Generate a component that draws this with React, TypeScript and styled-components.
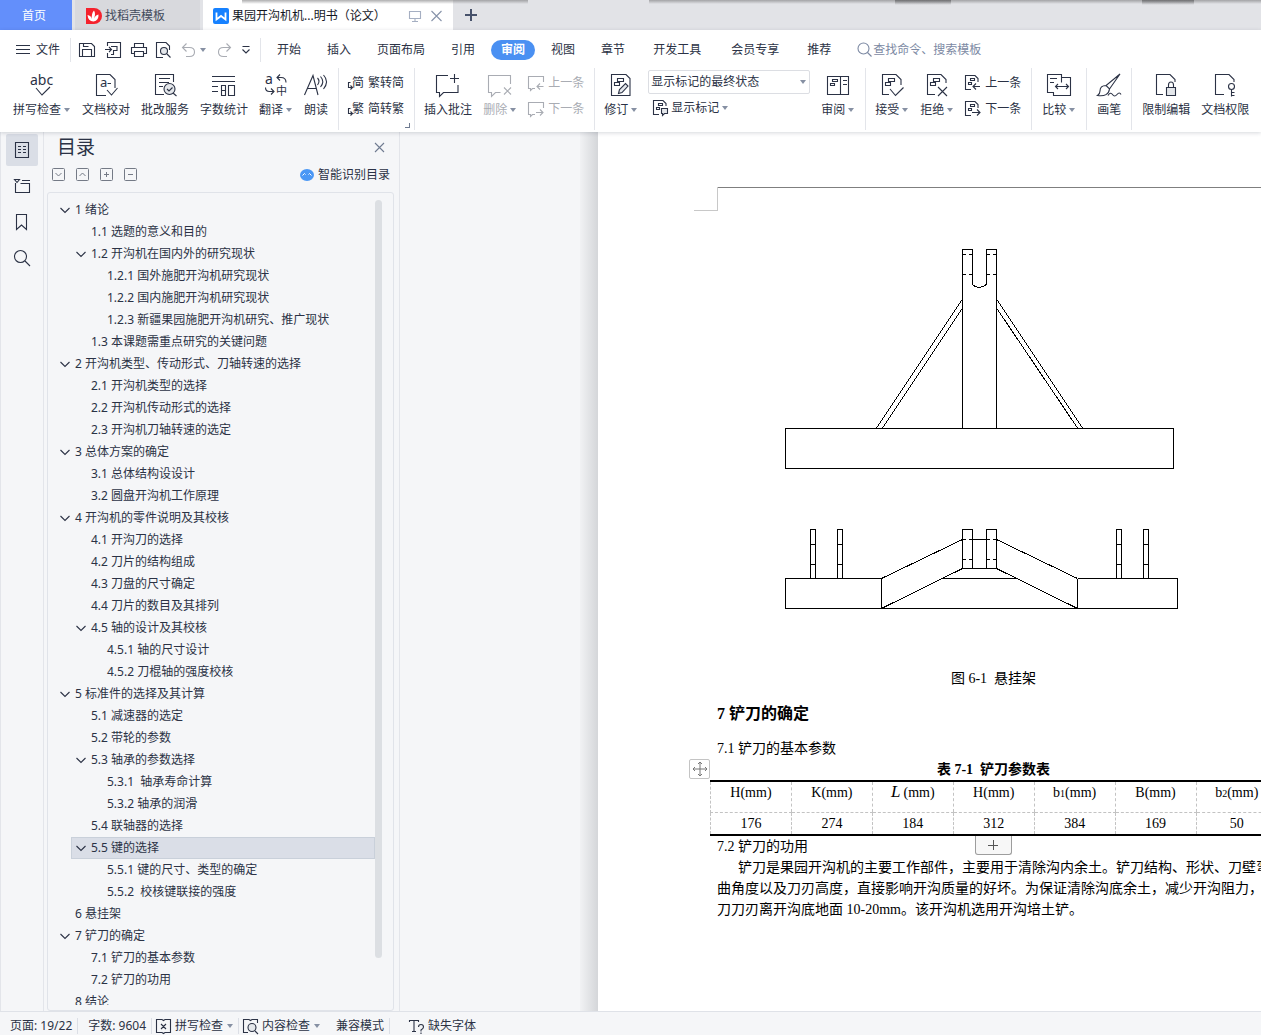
import React from "react";
import styled, { createGlobalStyle, css } from "styled-components";

const INK = "#2b3245";
const MUTED = "#a9acb3";
const SLATE = "#6f7b91";
const LINE = "#e3e5ea";
const UI_FONT = '"Noto Sans", "Noto Sans CJK SC", sans-serif';
const DOC_FONT = '"Liberation Serif", "Noto Sans CJK SC", serif';

const GlobalStyle = createGlobalStyle`
  * { box-sizing: border-box; }
  body { margin: 0; font-family: ${UI_FONT}; font-size: 12px; line-height: 16px; color: ${INK}; background: #f5f6f8; }
  h1, h2, h3, p, ul { margin: 0; padding: 0; font-weight: normal; }
  button, select, input { font: inherit; color: inherit; background: none; border: 0; padding: 0; margin: 0; border-radius: 0; }
  button { cursor: pointer; white-space: nowrap; }
  svg { display: block; flex: none; overflow: visible; }
`;

/* ---------- shell ---------- */

const Shell = styled.div`
  display: flex;
  flex-direction: column;
  height: 100vh;
  overflow: hidden;
`;

const TabBar = styled.nav`
  position: relative;
  display: flex;
  flex: none;
  height: 30px;
  background: #e2e3e7;
`;

const TopShade = styled.div<{ $left: string; $right: string; $dark?: boolean }>`
  position: absolute;
  top: 0;
  left: ${(p) => p.$left};
  right: ${(p) => p.$right};
  height: ${(p) => (p.$dark ? 5 : 4)}px;
  pointer-events: none;
  background: linear-gradient(${(p) => (p.$dark ? "rgba(70,70,72,.55)" : "rgba(120,120,122,.6)")}, rgba(150, 150, 152, 0));
`;

const Tab = styled.button<{ $kind: "home" | "idle" | "active" }>`
  display: flex;
  align-items: center;
  height: 30px;
  margin-right: 3px;
  padding-top: 2px;
  font-size: 12px;
  ${(p) =>
    p.$kind === "home" &&
    css`
      width: 72px;
      justify-content: center;
      padding-right: 4px;
      color: #fff;
      background: #638ffb;
    `}
  ${(p) =>
    p.$kind === "idle" &&
    css`
      width: 125px;
      padding-left: 10px;
      gap: 3px;
      color: #434b5c;
      background: #d8d9dd;
    `}
  ${(p) =>
    p.$kind === "active" &&
    css`
      width: 250px;
      margin-right: 0;
      padding-left: 10px;
      padding-right: 11px;
      gap: 3px;
      color: #14171f;
      background: #fff;
    `}
`;

const TabTitle = styled.span`
  flex: 1;
  text-align: left;
`;

const NewTab = styled.button`
  display: grid;
  place-items: center;
  width: 36px;
`;

/* ---------- menu row ---------- */

const Head = styled.header`
  position: relative;
  z-index: 1;
  flex: none;
  background: #fff;
  box-shadow: 0 1px 4px rgba(30, 40, 60, 0.18);
`;

const MenuRow = styled.div`
  display: flex;
  align-items: center;
  height: 38px;
  padding-top: 1px;
  white-space: nowrap;
`;

const FileButton = styled.button`
  display: flex;
  align-items: center;
  gap: 6px;
  padding: 0 10px 0 16px;
`;

const QuickTools = styled.div`
  display: flex;
  align-items: center;
  gap: 10px;
  height: 24px;
  padding: 0 8px;
  border: solid ${LINE};
  border-width: 0 1px;
`;

const UndoPair = styled.div`
  display: flex;
  align-items: center;
  gap: 5px;
`;

const IconButton = styled.button<{ $w?: number }>`
  display: grid;
  place-items: center;
  width: ${(p) => p.$w ?? 16}px;
  height: 16px;
`;

const MenuItem = styled.button<{ $wide?: boolean; $active?: boolean }>`
  padding: 0 ${(p) => (p.$wide ? 15 : 13)}px;
  height: 20px;
  ${(p) =>
    p.$active &&
    css`
      margin: 0 3px;
      padding: 0 10px;
      border-radius: 10px;
      color: #fff;
      font-weight: bold;
      background: #4a90f2;
    `}
`;

const MenuList = styled.div`
  display: flex;
  align-items: center;
  padding-left: 3px;
`;

const Search = styled.label`
  display: flex;
  align-items: center;
  gap: 1px;
  flex: 1;
  padding-left: 13px;
  color: #7c89a3;
`;

const SearchInput = styled.input`
  flex: 1;
  min-width: 120px;
  height: 20px;
  outline: 0;
  &::placeholder { color: #7c89a3; opacity: 1; }
`;

/* ---------- ribbon ---------- */

const Ribbon = styled.div`
  display: flex;
  height: 64px;
  padding: 0 0 2px 3px;
`;

const Group = styled.div<{ $last?: boolean; $tight?: boolean }>`
  position: relative;
  display: flex;
  flex: none;
  gap: 11px;
  padding: 0 10px 0 ${(p) => (p.$tight ? 9 : 10)}px;
  border-right: ${(p) => (p.$last ? "0" : `1px solid ${LINE}`)};
`;

const BigButton = styled.button<{ $off?: boolean }>`
  display: flex;
  flex-direction: column;
  align-items: center;
  gap: 5px;
  padding-top: 5px;
  height: 50px;
  color: ${(p) => (p.$off ? MUTED : INK)};
`;

const Labelled = styled.span`
  display: flex;
  align-items: center;
`;

const Stack = styled.div`
  display: flex;
  flex-direction: column;
  gap: 6px;
  padding-top: 5px;
`;

const SmallButton = styled.button<{ $off?: boolean }>`
  display: flex;
  align-items: center;
  gap: 4px;
  height: 20px;
  color: ${(p) => (p.$off ? MUTED : INK)};
`;

const MarkupStack = styled(Stack)`
  gap: 4px;
  padding-top: 2px;
  margin-left: -1px;
`;

const MarkupOption = styled(SmallButton)`
  gap: 3px;
  padding-left: 4px;
`;

const SelectBox = styled.label`
  display: flex;
  align-items: center;
  width: 162px;
  height: 24px;
  padding: 0 3px 0 2px;
  border: 1px solid #dcdee3;
  border-radius: 2px;
`;

const Select = styled.select`
  flex: 1;
  min-width: 0;
  height: 22px;
  appearance: none;
  outline: 0;
`;

const CaretBox = styled.span`
  padding: 0 1px 0 3px;
`;

const Launcher = styled.button`
  position: absolute;
  right: 4px;
  bottom: 2px;
  width: 5px;
  height: 5px;
  border: solid ${SLATE};
  border-width: 0 1px 1px 0;
`;

/* ---------- left side ---------- */

const Body = styled.div`
  display: flex;
  flex: 1;
  min-height: 0;
`;

const Rail = styled.nav`
  display: flex;
  flex-direction: column;
  flex: none;
  align-items: center;
  gap: 4px;
  width: 44px;
  padding-top: 2px;
  border: solid ${LINE};
  border-width: 0 1px;
`;

const RailButton = styled.button<{ $on?: boolean }>`
  display: grid;
  place-items: center;
  width: 32px;
  height: 32px;
  border-radius: 2px;
  background: ${(p) => (p.$on ? "#dadee6" : "none")};
`;

const Panel = styled.aside`
  display: flex;
  flex-direction: column;
  flex: none;
  width: 356px;
  padding: 0 5px 0 3px;
  border-right: 1px solid ${LINE};
`;

const PanelHead = styled.div`
  display: flex;
  align-items: center;
  justify-content: space-between;
  height: 30px;
  padding: 0 9px 0 10px;
`;

const PanelTitle = styled.h2`
  font-size: 19px;
  line-height: 26px;
`;

const PanelTools = styled.div`
  display: flex;
  align-items: center;
  gap: 10px;
  height: 30px;
  padding: 0 4px 5px 5px;
`;

const SmartButton = styled.button`
  display: flex;
  align-items: center;
  gap: 4px;
  margin-left: auto;
`;

const TreeBox = styled.div`
  display: flex;
  flex: 1;
  min-height: 0;
  padding: 6px 11px 5px 7px;
  border: 1px solid #e0e3e9;
  border-radius: 3px;
`;

const Tree = styled.ul`
  flex: 1;
  overflow: hidden;
  list-style: none;
`;

const TreeRow = styled.li<{ $level: number; $on?: boolean }>`
  display: flex;
  align-items: center;
  height: 22px;
  margin-left: ${(p) => p.$level * 16}px;
  white-space: pre;
  background: ${(p) => (p.$on ? "#dadee7" : "none")};
  box-shadow: ${(p) => (p.$on ? "inset 0 0 0 1px #c9d0da" : "none")};
`;

const Toggle = styled.button`
  display: grid;
  place-items: center;
  width: 20px;
  height: 20px;
`;

const ToggleSpace = styled.span`
  width: 20px;
`;

const ScrollThumb = styled.div`
  width: 7px;
  height: 94%;
  margin-top: 1px;
  border-radius: 4px;
  background: #dcdfe3;
`;

/* ---------- document ---------- */

const Canvas = styled.main`
  flex: 1;
  display: flex;
  min-width: 0;
  overflow: hidden;
  padding-left: 180px;
`;

const PageEdge = styled.div`
  flex: none;
  width: 18px;
  background: linear-gradient(90deg, #f1f2f4, #d4d6d9);
`;

const Page = styled.article`
  flex: none;
  width: 794px;
  padding: 55px 122px 0 96px;
  background: #fff;
  color: #000;
  font-family: ${DOC_FONT};
  font-size: 14px;
  line-height: 21px;
`;

const HeaderLine = styled.div`
  display: flex;
`;

const Corner = styled.div`
  width: 24px;
  height: 24px;
  border: solid #c8c8c8;
  border-width: 0 1px 1px 0;
`;

const Rule = styled.div`
  flex: 1;
  border-top: 1px solid #7f7f7f;
`;

const Content = styled.div`
  padding-left: 23px;
`;

const Figure = styled.figure`
  display: flex;
  flex-direction: column;
  align-items: center;
  gap: 58px;
  margin: 0;
  padding-top: 38px;
  white-space: pre;
`;

const Heading = styled.h1`
  margin-top: 12px;
  font-size: 16px;
  line-height: 26px;
  font-weight: bold;
`;

const SubHeading = styled.h3<{ $gap?: boolean }>`
  font-size: 14px;
  line-height: 21px;
  margin-top: ${(p) => (p.$gap ? 11 : 0)}px;
`;

const TableWrap = styled.div`
  position: relative;
  margin: 0 -7px;
`;

const DataTable = styled.table`
  width: 100%;
  table-layout: fixed;
  border-collapse: collapse;
  border: solid #000;
  border-width: 2px 0;
  caption {
    font-weight: bold;
    white-space: pre;
  }
`;

const cell = css`
  padding: 0;
  vertical-align: top;
  font-weight: normal;
  text-align: center;
  white-space: nowrap;
  border-left: 1px dashed #c3c3c3;
`;

const HeadCell = styled.th`
  ${cell}
  height: 31px;
  border-bottom: 1px dashed #c3c3c3;
  i { font-size: 17px; line-height: 16px; margin-right: 3px; }
  small { font-size: 10px; line-height: 16px; }
`;

const DataCell = styled.td`
  ${cell}
`;

const MoveHandle = styled.button`
  position: absolute;
  left: -21px;
  top: 0;
  display: grid;
  place-items: center;
  width: 21px;
  height: 20px;
  border: 1px solid #c4c4c4;
  border-radius: 2px;
  background: #fff;
`;

const AddRow = styled.button`
  position: absolute;
  left: calc(50% - 19px);
  top: 100%;
  display: grid;
  place-items: center;
  width: 37px;
  height: 19px;
  border: 1px solid #9d9d9d;
  border-top: 0;
  border-radius: 0 0 3px 3px;
  background: #f7f7f7;
`;

const Paragraph = styled.p<{ $indent?: boolean }>`
  text-indent: ${(p) => (p.$indent ? 21 : 0)}px;
  white-space: nowrap;
`;

/* ---------- status bar ---------- */

const StatusBar = styled.footer`
  display: flex;
  align-items: center;
  flex: none;
  height: 24px;
  padding-top: 5px;
  border-top: 1px solid #dfe2e8;
  white-space: nowrap;
`;

const StatusItem = styled.button<{ $line?: boolean; $wide?: boolean }>`
  display: flex;
  align-items: center;
  gap: 4px;
  height: 16px;
  padding: 0 5px 0 ${(p) => (p.$wide ? 10 : 4)}px;
  border-right: 1px solid ${(p) => (p.$line ? "#dcdfe6" : "transparent")};
`;

const StatusWarning = styled(StatusItem)`
  margin-left: 15px;
`;

/* ---------- icons ---------- */

const Svg = ({ s = 24, w, children, c = "currentColor" }: { s?: number; w?: number; c?: string; children: React.ReactNode }) => (
  <svg width={w ?? s} height={s} viewBox={`0 0 ${w ?? s} ${s}`} fill="none" stroke={c} strokeWidth="1.1" aria-hidden="true">
    {children}
  </svg>
);

const Glyph = ({ x, y, size, children }: { x: number; y: number; size: number; children: string }) => (
  <text x={x} y={y} fontSize={size} fill="currentColor" stroke="none">{children}</text>
);

const Caret = () => (
  <svg width="6" height="4" viewBox="0 0 6 4" aria-hidden="true"><path d="M0 0h6L3 4z" fill="#8690a3" /></svg>
);

const Bars = () => <path d="M8.5 5.500h6v3h-6zM5.500 9.500h5v3h-5z" />;
const SmallBars = () => <path d="M6.5 3.500h4v2h-4zM4.500 7.500h3v2h-3z" />;

const icons: Record<string, React.ReactNode> = {
  spell: <Svg><Glyph x={0} y={12} size={14}>abc</Glyph><path d="M6 15l6 7 8-8" /></Svg>,
  proof: <Svg><path d="M12 22.500H2.500v-21H16l5 5V15M13 17l4.500 5 6-7M13.500 10.500H17" /><Glyph x={6} y={14} size={13}>a</Glyph></Svg>,
  service: <Svg><path d="M11 21.500H2.500v-20h18V9M6 5.500h11M6 9.500h10M6 13.500h4M20 20l3.500 3" /><circle cx="16.500" cy="16" r="5.500" fill="#e4e7eb" /><path d="M14 16l2 2 3.500-3.500" /></Svg>,
  count: <Svg><path d="M0 3.500h23M0 8.500h23M0 13.500h6M0 18.500h6M9.500 12.500h4v10h-4zM9.500 17.500h4M16.500 12.500h6v10h-6z" /></Svg>,
  translate: <Svg><Glyph x={1} y={11} size={14}>a</Glyph><Glyph x={12} y={22} size={11}>中</Glyph><path d="M16 1.500l-3 3 3 3M13 4.500h4q5 0 5 5M1.500 14.500q0 4 4 4h4M7 15.500l3 3-3 3" /></Svg>,
  read: <Svg><path d="M0.500 22L9 2.500 14 22M3.500 15.500H12M13.500 5q3 3 0 7M16.500 3.500q4.500 5 0 10.500M19.500 2q6 6.500 0 14" /></Svg>,
  comment: <Svg><path d="M12 2.500H.500v17h3v4l4-4h14.500V12M18.500 1v9M14 5.500h9" /></Svg>,
  remove: <Svg><path d="M22.500 11V2.500H.500v17h3v4l4-4h5M16 14.500l7 7M23 14.500l-7 7" /></Svg>,
  revise: <Svg><path d="M2.500 1.500H17l4 4v17H2.500z" /><Bars /><path d="M9.500 20.500l1-4 6-6 2.500 2.500-6 6.500z" fill="#e4e7eb" /></Svg>,
  review: <Svg><path d="M1.500 3.500h21v18h-21zM14.500 3.500v18M17 7.500h4M17 11.500h4M6.500 6.500h5v2h-5zM4.500 10.500h4v2h-4z" /></Svg>,
  accept: <Svg><path d="M9 21.500H2.500v-20H16l5 5V12M10 16l5.500 6.500 8-8" /><Bars /></Svg>,
  reject: <Svg><path d="M10 21.500H2.500v-20H16l5 5V10M13 14l9 9M22 14l-9 9" /><Bars /></Svg>,
  compare: <Svg><path d="M7 19.500H.500v-18h14v8M3 5.500h7M3 9.500h4M14.500 4.500h9v18h-17v-3M8.500 13.500h13M11 11l-2.500 2.500L11 16M19 11l2.500 2.500L19 16" /></Svg>,
  brush: <Svg><path d="M23 1L9 12.500l3.500 3.500zM9 12.500q-6 0-6 5.500 0 3-2.500 4.500 11 1.500 12-6.500M11 22.500q2.500-4 4.500-1t4.500 0 4 0" /></Svg>,
  lock: <Svg><path d="M9 21.500H2.500v-20H16l5 5V9" /><path d="M12.500 14.500h9v8h-9z" fill="#e4e7eb" /><path d="M14.500 14.500V12q0-3 2.500-3t2.500 3v2.500" /></Svg>,
  rights: <Svg><path d="M11 21.500H2.500v-20H16l5 5V9M18.500 16.500v7M18.500 19.500h3M18.500 22.500h3" /><circle cx="18.500" cy="13.500" r="3" /></Svg>,
  toSimple: <Svg s={16}><Glyph x={4} y={12} size={12}>简</Glyph><path d="M2.500 7.500h-2v5H4M2.500 10.500l2 2-2 2" /></Svg>,
  toTrad: <Svg s={16}><Glyph x={4} y={12} size={12}>繁</Glyph><path d="M2.500 7.500h-2v5H4M2.500 10.500l2 2-2 2" /></Svg>,
  prevNote: <Svg s={16}><path d="M15.500 7V1.500H.500v12h2v2l2-2H7M15.500 11.500H9M12 8.500l-3 3 3 3" /></Svg>,
  nextNote: <Svg s={16}><path d="M15.500 7V1.500H.500v12h2v2l2-2H7M8 11.500h7M12 8.500l3 3-3 3" /></Svg>,
  prevEdit: <Svg s={16}><path d="M6 14.500H.500V.500H10l3 3V7M15 11.500H8M11 8.500l-3 3 3 3" /><path d="M5.500 3.500h4v2h-4zM3.500 7.500h3v2h-3z" /></Svg>,
  nextEdit: <Svg s={16}><path d="M6 14.500H.500V.500H10l3 3V7M7 11.500h8M12 8.500l3 3-3 3" /><path d="M5.500 3.500h4v2h-4zM3.500 7.500h3v2h-3z" /></Svg>,
  markup: <Svg s={16}><path d="M7 14.500H1.500V.500H11l3 3V6" /><SmallBars /><path d="M9.500 8.500h6v5h-3l-2 2v-2h-1z" fill="#e4e7eb" /></Svg>,
  save: <Svg s={16}><path d="M.500 1.500h12l3 3v10H.500zM3.500 14.500v-7h9v7M4.500 1.500v3h5" /></Svg>,
  pdf: <Svg s={16}><path d="M2.500 4V.500h13v15h-13V11M0 7.500h6M4 5l2.500 2.500L4 10M6 4.500h6v4H8.500v4H6" /></Svg>,
  print: <Svg s={16}><path d="M3.500 5V1.500h9V5M3.500 11.500h-3v-6h15v6h-3M3.500 9.500h9v5h-9z" /></Svg>,
  preview: <Svg s={16}><path d="M8 15.500H1.500V.500H11l3.500 3.500V8M12 12l3.500 3.500" /><circle cx="9" cy="9" r="3.500" fill="#e4e7eb" /></Svg>,
  undo: <Svg s={16} c={MUTED}><path d="M5.500 1.500l-4 4 4 4M1.500 5.500h7q5 0 5 4.500t-5 4.500H5" /></Svg>,
  redo: <Svg s={16} c={MUTED}><path d="M10.500 1.500l4 4-4 4M14.500 5.500h-7q-5 0-5 4.500t5 4.500H11" /></Svg>,
};

type Tool = { icon: string; label: string; caret?: boolean; off?: boolean };
const BigTool = ({ icon, label, caret, off }: Tool) => (
  <BigButton $off={off}>
    {icons[icon]}
    <Labelled>
      {label}
      {caret && <CaretBox><Caret /></CaretBox>}
    </Labelled>
  </BigButton>
);

const SmallTool = ({ icon, label, off }: Tool) => (
  <SmallButton $off={off}>{icons[icon]}{label}</SmallButton>
);

const BoxIcon = ({ d }: { d: string }) => (
  <svg width="14" height="14" viewBox="0 0 14 14" fill="none" stroke="#747a86" aria-hidden="true">
    <rect x=".5" y=".5" width="12" height="12" rx="1" />
    <path d={d} />
  </svg>
);

/* ---------- data ---------- */

type Node = [level: number, text: string, open?: boolean, selected?: boolean];
const outline: Node[] = [
  [0, "1 绪论", true],
  [1, "1.1 选题的意义和目的"],
  [1, "1.2 开沟机在国内外的研究现状", true],
  [2, "1.2.1 国外施肥开沟机研究现状"],
  [2, "1.2.2 国内施肥开沟机研究现状"],
  [2, "1.2.3 新疆果园施肥开沟机研究、推广现状"],
  [1, "1.3 本课题需重点研究的关键问题"],
  [0, "2 开沟机类型、传动形式、刀轴转速的选择", true],
  [1, "2.1 开沟机类型的选择"],
  [1, "2.2 开沟机传动形式的选择"],
  [1, "2.3 开沟机刀轴转速的选定"],
  [0, "3 总体方案的确定", true],
  [1, "3.1 总体结构设设计"],
  [1, "3.2 圆盘开沟机工作原理"],
  [0, "4 开沟机的零件说明及其校核", true],
  [1, "4.1 开沟刀的选择"],
  [1, "4.2 刀片的结构组成"],
  [1, "4.3 刀盘的尺寸确定"],
  [1, "4.4 刀片的数目及其排列"],
  [1, "4.5 轴的设计及其校核", true],
  [2, "4.5.1 轴的尺寸设计"],
  [2, "4.5.2 刀棍轴的强度校核"],
  [0, "5 标准件的选择及其计算", true],
  [1, "5.1 减速器的选定"],
  [1, "5.2 带轮的参数"],
  [1, "5.3 轴承的参数选择", true],
  [2, "5.3.1  轴承寿命计算"],
  [2, "5.3.2 轴承的润滑"],
  [1, "5.4 联轴器的选择"],
  [1, "5.5 键的选择", true, true],
  [2, "5.5.1 键的尺寸、类型的确定"],
  [2, "5.5.2  校核键联接的强度"],
  [0, "6 悬挂架"],
  [0, "7 铲刀的确定", true],
  [1, "7.1 铲刀的基本参数"],
  [1, "7.2 铲刀的功用"],
  [0, "8 结论"],
];

const columns: { head: React.ReactNode; value: number }[] = [
  { head: "H(mm)", value: 176 },
  { head: "K(mm)", value: 274 },
  { head: <><i>L</i>(mm)</>, value: 184 },
  { head: "H(mm)", value: 312 },
  { head: <>b<small>1</small>(mm)</>, value: 384 },
  { head: "B(mm)", value: 169 },
  { head: <>b<small>2</small>(mm)</>, value: 50 },
];

const HitchDrawing = () => (
  <svg width="418" height="361" viewBox="785 249 418 361" fill="none" stroke="#000" shapeRendering="crispEdges" role="img" aria-label="悬挂架">
    <path d="M785.5 428.5h388v40h-388z" />
    <path d="M962.5 428.5v-179h10v35q6 6 14 0v-35h10v179" />
    <path d="M962 254.500h4m3 0h4M986 254.500h4m3 0h4M962 274.500h4m3 0h4M986 274.500h4m3 0h4" />
    <path d="M962.500 299L876.500 428M962.500 308L882.500 428M996.500 299L1082.500 428M996.500 308L1077.500 428" />
    <path d="M881.500 578.500h-96v30h392v-30h-100M881.500 578.500v30M1077.500 578.500v30" />
    <path d="M810.500 578.500v-49h5v49M810.500 544.500h5M810.500 564.500h5M837.500 578.500v-49h5v49M837.500 544.500h5M837.500 564.500h5" />
    <path d="M1116.500 578.500v-49h5v49M1116.500 544.500h5M1116.500 564.500h5M1143.500 578.500v-49h5v49M1143.500 544.500h5M1143.500 564.500h5" />
    <path d="M962.500 568.500v-39h10v39M986.500 568.500v-39h10v39M962.500 568.500h34M972.500 539.500h14" />
    <path d="M962 539.500h4m3 0h4M986 539.500h4m3 0h4M962 559.500h4m3 0h4M986 559.500h4m3 0h4" />
    <path d="M881.500 578.500l81-39M996.500 539.500l81 39M881.500 608.500l81-40M996.500 568.500l81 40M942 578.500h75" />
  </svg>
);

export default function App() {
  return (
    <Shell>
      <GlobalStyle />
      <TabBar>
        <Tab $kind="home">首页</Tab>
        <Tab $kind="idle">
          <svg width="17" height="16" viewBox="0 0 17 16" aria-hidden="true">
            <path d="M1 0h8a7.500 7.500 0 010 16H1z" fill="#f5222d" />
            <path d="M8.500 13.500Q3 13 2.500 7q3.500.500 4.500 4Q6 6 9 2.500q2 3.500 0 8 1.500-3.500 4.500-4 .500 6-5 7z" fill="#fff" />
          </svg>
          找稻壳模板
        </Tab>
        <Tab $kind="active">
          <svg width="16" height="16" viewBox="0 0 16 16" aria-hidden="true">
            <rect width="16" height="16" rx="2" fill="#1681ff" />
            <path d="M3.500 4.500V11.500L8 8l4.500 3.500v-7" fill="none" stroke="#fff" strokeWidth="1.800" />
          </svg>
          <TabTitle>果园开沟机机...明书（论文）</TabTitle>
          <Svg s={12} c="#a5afc2"><path d="M.500 1.500h11v7H.500zM6 8.500v3M3 11.500h6" /></Svg>
          <Svg s={12} w={18} c="#8793aa"><path d="M7.500 1l10 10M17.500 1l-10 10" /></Svg>
        </Tab>
        <NewTab aria-label="新建标签">
          <svg width="12" height="12" viewBox="0 0 12 12" stroke="#47526b" strokeWidth="2" aria-hidden="true"><path d="M6 0v12M0 6h12" /></svg>
        </NewTab>
        <TopShade $left="19.2%" $right="58.1%" />
        <TopShade $left="51.5%" $right="0" />
        <TopShade $left="71%" $right="24.600%" $dark />
        <TopShade $left="90.600%" $right="5.300%" $dark />
      </TabBar>

      <Head>
        <MenuRow>
          <FileButton>
            <Svg s={14}><path d="M0 2.500h14M0 6.500h14M0 10.500h14" /></Svg>
            文件
          </FileButton>
          <QuickTools>
            <IconButton aria-label="保存">{icons.save}</IconButton>
            <IconButton aria-label="输出为PDF">{icons.pdf}</IconButton>
            <IconButton aria-label="打印" $w={14}>{icons.print}</IconButton>
            <IconButton aria-label="打印预览">{icons.preview}</IconButton>
            <UndoPair>
              <IconButton aria-label="撤销" $w={14}>{icons.undo}</IconButton>
              <IconButton aria-label="撤销列表" $w={6}><Caret /></IconButton>
            </UndoPair>
            <IconButton aria-label="恢复" $w={14}>{icons.redo}</IconButton>
            <IconButton aria-label="自定义" $w={12}><Svg s={10}><path d="M1.500 1.500h7M1.500 4.500L5 8l3.500-3.500" /></Svg></IconButton>
          </QuickTools>
          <MenuList>
            <MenuItem>开始</MenuItem>
            <MenuItem>插入</MenuItem>
            <MenuItem>页面布局</MenuItem>
            <MenuItem>引用</MenuItem>
            <MenuItem $active>审阅</MenuItem>
            <MenuItem>视图</MenuItem>
            <MenuItem>章节</MenuItem>
            <MenuItem $wide>开发工具</MenuItem>
            <MenuItem $wide>会员专享</MenuItem>
            <MenuItem>推荐</MenuItem>
          </MenuList>
          <Search>
            <Svg s={15}><circle cx="6.500" cy="6.500" r="5.500" /><path d="M10.500 10.500l4 4" /></Svg>
            <SearchInput placeholder="查找命令、搜索模板" />
          </Search>
        </MenuRow>

        <Ribbon>
          <Group>
            <BigTool icon="spell" label="拼写检查" caret />
            <BigTool icon="proof" label="文档校对" />
            <BigTool icon="service" label="批改服务" />
            <BigTool icon="count" label="字数统计" />
            <BigTool icon="translate" label="翻译" caret />
            <BigTool icon="read" label="朗读" />
          </Group>
          <Group $tight>
            <Stack>
              <SmallTool icon="toSimple" label="繁转简" />
              <SmallTool icon="toTrad" label="简转繁" />
            </Stack>
            <Launcher aria-label="中文简繁转换" />
          </Group>
          <Group $tight>
            <BigTool icon="comment" label="插入批注" />
            <BigTool icon="remove" label="删除" caret off />
            <Stack>
              <SmallTool icon="prevNote" label="上一条" off />
              <SmallTool icon="nextNote" label="下一条" off />
            </Stack>
          </Group>
          <Group $tight>
            <BigTool icon="revise" label="修订" caret />
            <MarkupStack>
              <SelectBox>
                <Select aria-label="显示状态" defaultValue="final">
                  <option value="final">显示标记的最终状态</option>
                </Select>
                <Caret />
              </SelectBox>
              <MarkupOption>
                {icons.markup}
                <Labelled>显示标记<CaretBox><Caret /></CaretBox></Labelled>
              </MarkupOption>
            </MarkupStack>
            <BigTool icon="review" label="审阅" caret />
          </Group>
          <Group $tight>
            <BigTool icon="accept" label="接受" caret />
            <BigTool icon="reject" label="拒绝" caret />
            <Stack>
              <SmallTool icon="prevEdit" label="上一条" />
              <SmallTool icon="nextEdit" label="下一条" />
            </Stack>
          </Group>
          <Group>
            <BigTool icon="compare" label="比较" caret />
          </Group>
          <Group>
            <BigTool icon="brush" label="画笔" />
          </Group>
          <Group $last>
            <BigTool icon="lock" label="限制编辑" />
            <BigTool icon="rights" label="文档权限" />
          </Group>
        </Ribbon>
      </Head>

      <Body>
        <Rail>
          <RailButton $on aria-label="目录">
            <Svg s={16}><path d="M1.500.500h13v15h-13zM4 4.500h3M9 4.500h3M4 7.500h3M9 7.500h3M4 10.500h3M9 10.500h3" /></Svg>
          </RailButton>
          <RailButton aria-label="章节">
            <Svg s={16}><path d="M.500 1.500h5l-2.500 3zM8 2.500h8M1.500 5v9.500h14v-9h-9" /></Svg>
          </RailButton>
          <RailButton aria-label="书签">
            <Svg s={16}><path d="M2.500.500h10v15l-5-4.500-5 4.500z" /></Svg>
          </RailButton>
          <RailButton aria-label="查找">
            <Svg s={16}><circle cx="6.500" cy="6.500" r="6" /><path d="M11 11l5 5" /></Svg>
          </RailButton>
        </Rail>

        <Panel>
          <PanelHead>
            <PanelTitle>目录</PanelTitle>
            <IconButton aria-label="关闭" $w={11}>
              <Svg s={11} c={SLATE}><path d="M1 1l9 9M10 1l-9 9" /></Svg>
            </IconButton>
          </PanelHead>
          <PanelTools>
            <IconButton aria-label="展开" $w={14}><BoxIcon d="M3.500 5l3 3 3-3" /></IconButton>
            <IconButton aria-label="收起" $w={14}><BoxIcon d="M3.500 8l3-3 3 3" /></IconButton>
            <IconButton aria-label="增加级别" $w={14}><BoxIcon d="M6.500 4v5M4 6.500h5" /></IconButton>
            <IconButton aria-label="减少级别" $w={14}><BoxIcon d="M4 6.500h5" /></IconButton>
            <SmartButton>
              <svg width="14" height="12" viewBox="0 0 14 12" aria-hidden="true">
                <ellipse cx="7" cy="6" rx="7" ry="6" fill="#4a97f5" />
                <path d="M2.500 6.500l2-2 1 1M11.500 6.500l-2-2-1 1" stroke="#fff" fill="none" />
              </svg>
              智能识别目录
            </SmartButton>
          </PanelTools>
          <TreeBox>
            <Tree>
              {outline.map(([level, text, open, selected]) => (
                <TreeRow key={text} $level={level} $on={selected}>
                  {open ? (
                    <Toggle aria-label={`折叠 ${text}`}>
                      <Svg s={10}><path d="M.500 3L5 7.500 9.500 3" /></Svg>
                    </Toggle>
                  ) : (
                    <ToggleSpace />
                  )}
                  {text}
                </TreeRow>
              ))}
            </Tree>
            <ScrollThumb />
          </TreeBox>
        </Panel>

        <Canvas>
          <PageEdge />
          <Page>
            <HeaderLine>
              <Corner />
              <Rule />
            </HeaderLine>
            <Content>
              <Figure>
                <HitchDrawing />
                <figcaption>图 6-1  悬挂架</figcaption>
              </Figure>
              <Heading>7 铲刀的确定</Heading>
              <SubHeading $gap>7.1 铲刀的基本参数</SubHeading>
              <TableWrap>
                <DataTable>
                  <caption>表 7-1  铲刀参数表</caption>
                  <thead>
                    <tr>{columns.map((c, i) => <HeadCell key={i} scope="col">{c.head}</HeadCell>)}</tr>
                  </thead>
                  <tbody>
                    <tr>{columns.map((c, i) => <DataCell key={i}>{c.value}</DataCell>)}</tr>
                  </tbody>
                </DataTable>
                <MoveHandle aria-label="移动表格">
                  <svg width="16" height="16" viewBox="0 0 16 16" fill="none" stroke="#777" aria-hidden="true">
                    <path d="M8 1v14M1 8h14M6 3l2-2 2 2M6 13l2 2 2-2M3 6L1 8l2 2M13 6l2 2-2 2" />
                  </svg>
                </MoveHandle>
                <AddRow aria-label="添加行">
                  <svg width="10" height="10" viewBox="0 0 10 10" stroke="#555" aria-hidden="true"><path d="M5.500 0v10M0 5.500h10" /></svg>
                </AddRow>
              </TableWrap>
              <SubHeading>7.2 铲刀的功用</SubHeading>
              <Paragraph $indent>铲刀是果园开沟机的主要工作部件，主要用于清除沟内余土。铲刀结构、形状、刀壁弯</Paragraph>
              <Paragraph>曲角度以及刀刃高度，直接影响开沟质量的好坏。为保证清除沟底余土，减少开沟阻力，铲</Paragraph>
              <Paragraph>刀刀刃离开沟底地面 10-20mm。该开沟机选用开沟培土铲。</Paragraph>
            </Content>
          </Page>
        </Canvas>
      </Body>

      <StatusBar>
        <StatusItem $line $wide>页面: 19/22</StatusItem>
        <StatusItem $line $wide>字数: 9604</StatusItem>
        <StatusItem $line>
          <Svg s={15}><path d="M6 .500H.500v13H6l1.500 1 1.500-1h5.500V.500H9L7.500 1.500zM5 5l5 5M10 5l-5 5" /></Svg>
          拼写检查<Caret />
        </StatusItem>
        <StatusItem>
          <Svg s={15}><path d="M5 13.500H.500V.500H6l1.500 1 1.500-1h5.500V4M12 12l3 3" /><circle cx="9" cy="8.500" r="4" fill="#e4e7eb" /></Svg>
          内容检查<Caret />
        </StatusItem>
        <StatusItem $line $wide>兼容模式</StatusItem>
        <StatusWarning>
          <Svg s={15}><path d="M.500 3V1.500h9V3M5 1.500v11M3 12.500h4M9.500 8q0-2.500 2.500-2.500T14.500 8q0 1.500-2.500 3v1.500M12 13.500V15" /></Svg>
          缺失字体
        </StatusWarning>
      </StatusBar>
    </Shell>
  );
}
